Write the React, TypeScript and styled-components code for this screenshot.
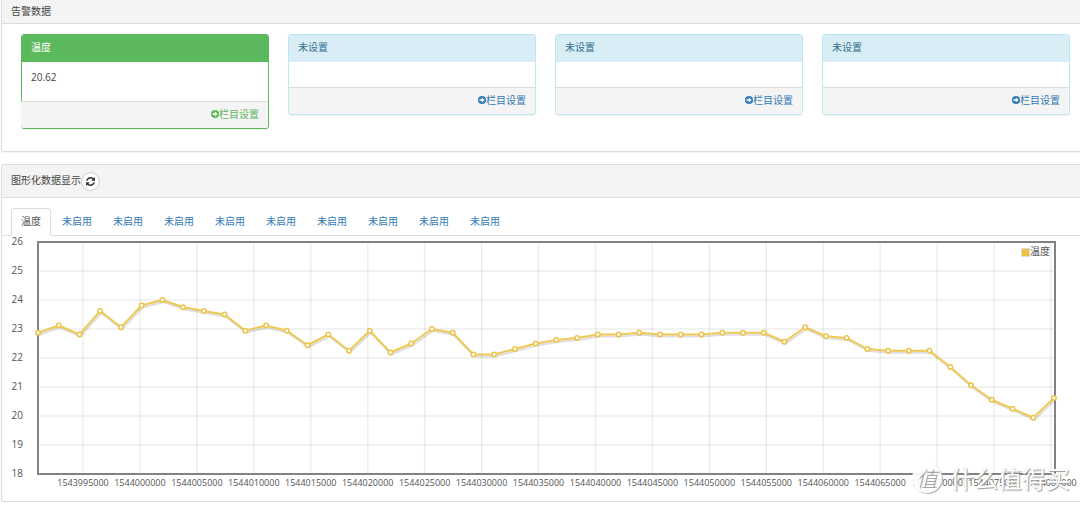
import React from "react";
import styled, { createGlobalStyle, css } from "styled-components";

const GlobalStyle = createGlobalStyle`
  * { box-sizing: border-box; }
  body {
    margin: 0;
    background: #fff;
    color: #444;
    font-family: "Open Sans", "Noto Sans CJK SC", sans-serif;
    font-size: 10px;
    line-height: 14px;
    overflow-x: hidden;
  }
`;

const Page = styled.main`
  display: flex;
  flex-direction: column;
  gap: 12px;
  padding-left: 1px;
  position: relative;
`;

const Panel = styled.section<{ $cut?: boolean }>`
  border: 1px solid #ddd;
  border-right: 0;
  border-radius: ${(p) => (p.$cut ? "0 0 0 3px" : "3px 0 0 3px")};
  ${(p) => p.$cut && css`border-top: 0;`}
  box-shadow: 0 1px 1px rgba(0, 0, 0, 0.05);
`;

const PanelHeader = styled.header<{ $tall?: boolean }>`
  display: flex;
  align-items: ${(p) => (p.$tall ? "center" : "flex-start")};
  height: ${(p) => (p.$tall ? 33 : 24)}px;
  padding: ${(p) => (p.$tall ? "0 9px" : "4px 9px")};
  background: #f4f4f4;
  border-bottom: 1px solid #ddd;
  border-radius: 2px 0 0 0;
`;

const PanelTitle = styled.h2<{ $raised?: boolean }>`
  margin: 0;
  padding-bottom: ${(p) => (p.$raised ? 2 : 0)}px;
  font-size: 10px;
  font-weight: 400;
`;

const RefreshButton = styled.button`
  display: flex;
  align-items: center;
  justify-content: center;
  width: 19px;
  height: 19px;
  padding: 1px 0 0;
  border: 1px solid #ccc;
  border-radius: 50%;
  background: #fff;
  color: #333;

  svg {
    width: 9px;
    height: 9px;
  }
`;

const Cards = styled.div`
  display: grid;
  grid-template-columns: repeat(4, 1fr);
  align-items: start;
  gap: 19px;
  padding: 10px 10px 22px 19px;
`;

const Card = styled.article<{ $active: boolean }>`
  border: 1px solid ${(p) => (p.$active ? "#5cb85c" : "#bce8f1")};
  border-radius: 3px;
  background: #fff;
  box-shadow: 0 1px 1px rgba(0, 0, 0, 0.05);
`;

const CardHeader = styled.h3<{ $active: boolean }>`
  margin: 0;
  height: 27px;
  padding: 5px 9px;
  font-size: 10px;
  font-weight: 400;
  color: ${(p) => (p.$active ? "#fff" : "#31708f")};
  background: ${(p) => (p.$active ? "#5cb85c" : "#d9edf7")};
  border-radius: 2px 2px 0 0;
`;

const CardBody = styled.div`
  min-height: 25px;
  padding: 8px 9px 10px;
`;

const Reading = styled.p`
  margin: 0;
  height: 21px;
`;

const CardFooter = styled.footer<{ $active: boolean }>`
  display: flex;
  justify-content: flex-end;
  align-items: flex-start;
  height: 27px;
  padding: 5px 9px;
  background: #f4f4f4;
  border-top: 1px solid #ddd;
  border-radius: 0 0 2px 2px;
  ${(p) => p.$active && css`margin-left: -1px;`}
`;

const SettingsLink = styled.a<{ $active: boolean }>`
  display: flex;
  align-items: center;
  color: ${(p) => (p.$active ? "#5cb85c" : "#337ab7")};
  text-decoration: none;

  svg {
    width: 8px;
    height: 8px;
  }
`;

const Tabs = styled.nav`
  display: flex;
  gap: 1px;
  margin-top: 10px;
  padding-left: 9px;
  border-bottom: 1px solid #ddd;
`;

const Tab = styled.button<{ $active: boolean }>`
  height: 28px;
  margin-bottom: -1px;
  padding: 0 9px 2px;
  border: 1px solid transparent;
  border-radius: 3px 3px 0 0;
  background: none;
  color: #337ab7;
  font: inherit;
  ${(p) =>
    p.$active &&
    css`
      border-color: #ddd #ddd #fff;
      background: #fff;
      color: #555;
    `}
`;

const ChartSvg = styled.svg`
  display: block;
  position: relative;
  width: 100%;
  height: auto;
  overflow: visible;
  font-family: "Open Sans", "Noto Sans CJK SC", sans-serif;
  font-size: 10px;
  fill: #545454;
`;

const Watermark = styled.div`
  position: absolute;
  right: 10px;
  bottom: 8px;
  display: flex;
  align-items: center;
  gap: 8px;
  color: #fff;
  font-family: "Noto Sans CJK SC", sans-serif;
  font-size: 24px;
  line-height: 32px;
  text-shadow: 1px 1px 1px #999, 0 0 1px #ccc;
  pointer-events: none;
`;

const WatermarkSeal = styled.span`
  display: flex;
  align-items: center;
  justify-content: center;
  width: 30px;
  height: 30px;
  border-radius: 50%;
  background: rgba(255, 255, 255, 0.9);
  box-shadow: 1px 1px 1px #aaa;
  color: #999;
  font-size: 21px;
  font-style: italic;
  font-weight: 300;
  text-shadow: none;
`;

const cards = [
  { title: "温度", value: "20.62", active: true },
  { title: "未设置", value: "", active: false },
  { title: "未设置", value: "", active: false },
  { title: "未设置", value: "", active: false },
];

const tabs = ["温度", ...Array<string>(9).fill("未启用")];

const readings = [
  22.87, 23.12, 22.81, 23.62, 23.06, 23.81, 24, 23.75, 23.62, 23.5,
  22.94, 23.12, 22.94, 22.44, 22.81, 22.25, 22.94, 22.19, 22.5, 23,
  22.87, 22.12, 22.12, 22.31, 22.5, 22.62, 22.69, 22.81, 22.81, 22.87,
  22.81, 22.81, 22.81, 22.87, 22.87, 22.87, 22.56, 23.06, 22.75, 22.69,
  22.31, 22.25, 22.25, 22.25, 21.69, 21.06, 20.56, 20.25, 19.94, 20.62,
];

const plot = { left: 36, right: 1053, top: 6, bottom: 238 };
const yTicks = [26, 25, 24, 23, 22, 21, 20, 19, 18];
const xTicks = Array.from({ length: 18 }, (_, i) => 1543995000 + i * 5000);

const yAt = (v: number) => plot.bottom - ((v - 18) / 8) * (plot.bottom - plot.top);
const xAt = (i: number) => plot.left + (i / (readings.length - 1)) * (plot.right - 1 - plot.left);
const tickX = (t: number) => 81 + ((t - xTicks[0]) / 85000) * 968;

function ArrowCircleIcon() {
  return (
    <svg viewBox="0 0 16 16" aria-hidden="true">
      <circle cx="8" cy="8" r="8" fill="currentColor" />
      <path d="M3 6.4h4.6V3.2L13.2 8l-5.600 4.800V9.600H3z" fill="#fff" />
    </svg>
  );
}

function RefreshIcon() {
  return (
    <svg viewBox="0 0 1536 1536" fill="currentColor" aria-hidden="true">
      <path d="M1511 928q0 5-1 7-64 268-268 434.500T764 1536q-146 0-282.500-55T238 1324l-129 129q-19 19-45 19t-45-19-19-45V960q0-26 19-45t45-19h448q26 0 45 19t19 45-19 45l-137 137q71 66 161 102t187 36q134 0 250-65t186-179q11-17 53-117 8-23 30-23h192q13 0 22.500 9.500t9.500 22.500zm25-800v448q0 26-19 45t-45 19h-448q-26 0-45-19t-19-45 19-45l138-138Q969 256 768 256q-134 0-250 65T332 500q-11 17-53 117-8 23-30 23H50q-13 0-22.500-9.500T18 608v-7q65-268 270-434.500T768 0q146 0 284 55.500T1297 212l130-129q19-19 45-19t45 19 19 45z" />
    </svg>
  );
}

function Chart() {
  const line = readings.map((v, i) => `${xAt(i)},${yAt(v)}`).join(" ");
  const shadow = readings.map((v, i) => `${xAt(i) + 1},${yAt(v) + 2}`).join(" ");
  return (
    <ChartSvg viewBox="0 0 1078 265" role="img" aria-label="温度">
      <g stroke="#000" strokeOpacity="0.07" strokeWidth="1.5">
        {yTicks.slice(1, -1).map((v) => (
          <line key={v} x1={plot.left} x2={plot.right} y1={yAt(v)} y2={yAt(v)} />
        ))}
        {xTicks.map((t) => (
          <line key={t} x1={tickX(t)} x2={tickX(t)} y1={plot.top} y2={plot.bottom} />
        ))}
      </g>
      <rect
        x={plot.left}
        y={plot.top}
        width={plot.right - plot.left}
        height={plot.bottom - plot.top}
        fill="none"
        stroke="#828282"
        strokeWidth="2"
      />
      <polyline points={shadow} fill="none" stroke="#000" strokeOpacity="0.13" strokeWidth="2" />
      <polyline points={line} fill="none" stroke="#edc955" strokeWidth="2" strokeLinejoin="round" />
      {readings.map((v, i) => (
        <circle key={i} cx={xAt(i)} cy={yAt(v)} r="2.2" fill="#fff" stroke="#edc34a" strokeWidth="1.5" />
      ))}
      {yTicks.map((v) => (
        <text key={v} x="21" y={yAt(v) + 3} textAnchor="end">
          {v}
        </text>
      ))}
      {xTicks.map((t) => (
        <text key={t} x={tickX(t)} y="250" textAnchor="middle" fontSize="9">
          {t}
        </text>
      ))}
      <rect x="1019.5" y="12.5" width="8" height="8" fill="#edc240" stroke="#ddd" />
      <text x="1028" y="19">温度</text>
    </ChartSvg>
  );
}

export default function App() {
  return (
    <>
      <GlobalStyle />
      <Page>
        <Panel $cut>
          <PanelHeader>
            <PanelTitle>告警数据</PanelTitle>
          </PanelHeader>
          <Cards>
            {cards.map((c, i) => (
              <Card key={i} $active={c.active}>
                <CardHeader $active={c.active}>{c.title}</CardHeader>
                <CardBody>{c.value && <Reading>{c.value}</Reading>}</CardBody>
                <CardFooter $active={c.active}>
                  <SettingsLink href="#" $active={c.active}>
                    <ArrowCircleIcon />
                    栏目设置
                  </SettingsLink>
                </CardFooter>
              </Card>
            ))}
          </Cards>
        </Panel>
        <Panel>
          <PanelHeader $tall>
            <PanelTitle $raised>图形化数据显示</PanelTitle>
            <RefreshButton type="button" aria-label="刷新">
              <RefreshIcon />
            </RefreshButton>
          </PanelHeader>
          <Tabs>
            {tabs.map((t, i) => (
              <Tab key={i} type="button" $active={i === 0}>
                {t}
              </Tab>
            ))}
          </Tabs>
          <Chart />
        </Panel>
        <Watermark>
          <WatermarkSeal>值</WatermarkSeal>
          什么值得买
        </Watermark>
      </Page>
    </>
  );
}
